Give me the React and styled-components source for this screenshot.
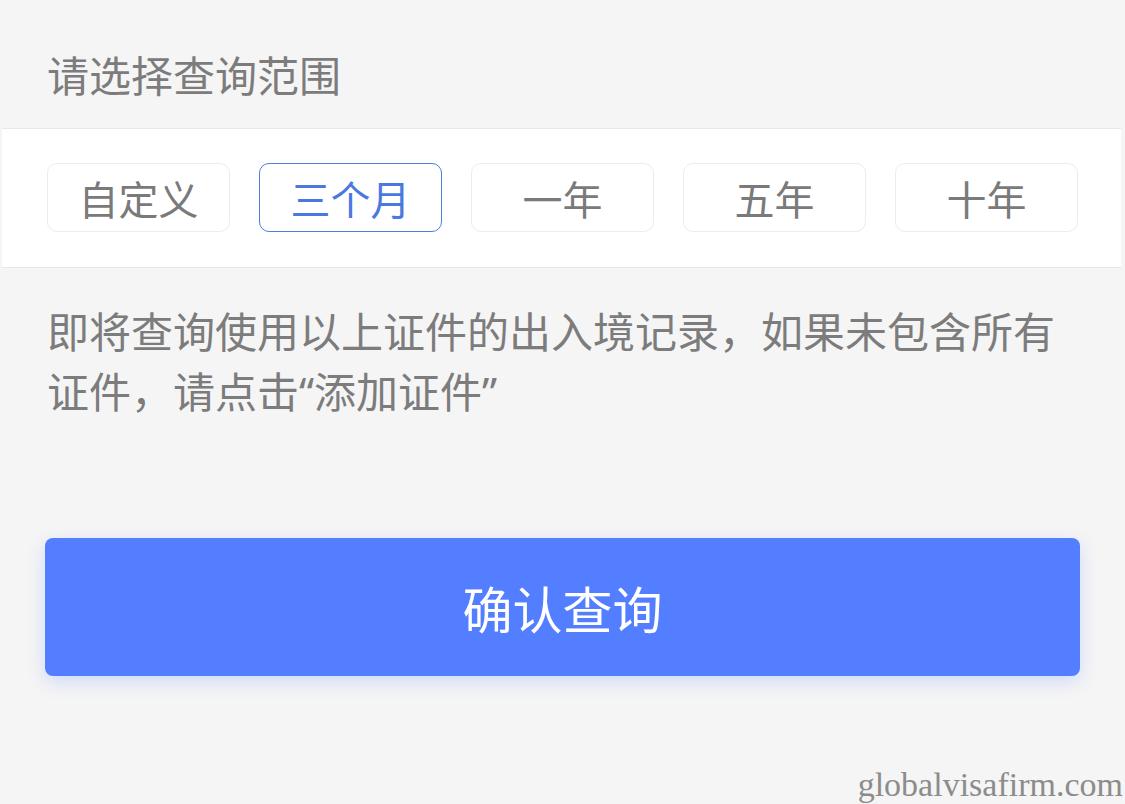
import React, { useState } from "react";
import styled, { createGlobalStyle } from "styled-components";

const Global = createGlobalStyle`
  html, body { margin: 0; padding: 0; background: #f5f5f5; }
  body { font-family: "Noto Sans CJK SC", "Noto Sans", sans-serif; }
  * { box-sizing: border-box; }
`;

const Page = styled.div`
  position: relative;
  width: 1125px;
  height: 804px;
  background: #f5f5f5;
  overflow: hidden;
`;

const Title = styled.div`
  padding: 53px 47px 33px;
  font-size: 42px;
  line-height: 42px;
  color: #7c7c7c;
`;

const Band = styled.div`
  margin: 0 4px 0 2px;
  background: #ffffff;
  border-top: 1px solid #e8e8e8;
  border-bottom: 1px solid #e8e8e8;
  padding: 34px 0 35px 45px;
`;

const Options = styled.div`
  display: grid;
  grid-template-columns: repeat(5, 183px);
  gap: 29px;
`;

const Option = styled.button`
  height: 69px;
  border-radius: 10px;
  border: 1px solid ${(p) => (p.$active ? "#4f7ee0" : "#ececec")};
  background: #ffffff;
  color: ${(p) => (p.$active ? "#4a78e0" : "#7a7a7a")};
  font-family: inherit;
  font-size: 40px;
  line-height: 1;
  padding: 0;
  cursor: pointer;
  display: flex;
  align-items: center;
  justify-content: center;
`;

const Notice = styled.p`
  margin: 34px 0 0;
  padding: 0 47px;
  max-width: 1110px;
  font-family: "Noto Sans", "Noto Sans CJK SC", sans-serif;
  font-size: 42px;
  line-height: 60px;
  color: #7c7c7c;
`;

const Confirm = styled.button`
  display: flex;
  align-items: center;
  justify-content: center;
  margin: 116px 0 0 45px;
  width: 1035px;
  height: 138px;
  border: none;
  border-radius: 8px;
  background: #527eff;
  color: #ffffff;
  font-family: inherit;
  font-size: 50px;
  line-height: 1;
  box-shadow: 0 6px 18px rgba(82, 126, 255, 0.22);
  cursor: pointer;
`;

const Watermark = styled.div`
  position: absolute;
  right: 2px;
  bottom: 1px;
  font-family: "Liberation Serif", "DejaVu Serif", serif;
  font-size: 34px;
  line-height: 36px;
  color: #8c8c8c;
`;

const options = ["自定义", "三个月", "一年", "五年", "十年"];

export default function App() {
  const [active, setActive] = useState(1);
  return (
    <Page>
      <Global />
      <Title>请选择查询范围</Title>
      <Band>
        <Options>
          {options.map((o, i) => (
            <Option key={o} $active={i === active} onClick={() => setActive(i)}>
              {o}
            </Option>
          ))}
        </Options>
      </Band>
      <Notice>
        即将查询使用以上证件的出入境记录，如果未包含所有证件，请点击“添加证件”
      </Notice>
      <Confirm>确认查询</Confirm>
      <Watermark>globalvisafirm.com</Watermark>
    </Page>
  );
}
